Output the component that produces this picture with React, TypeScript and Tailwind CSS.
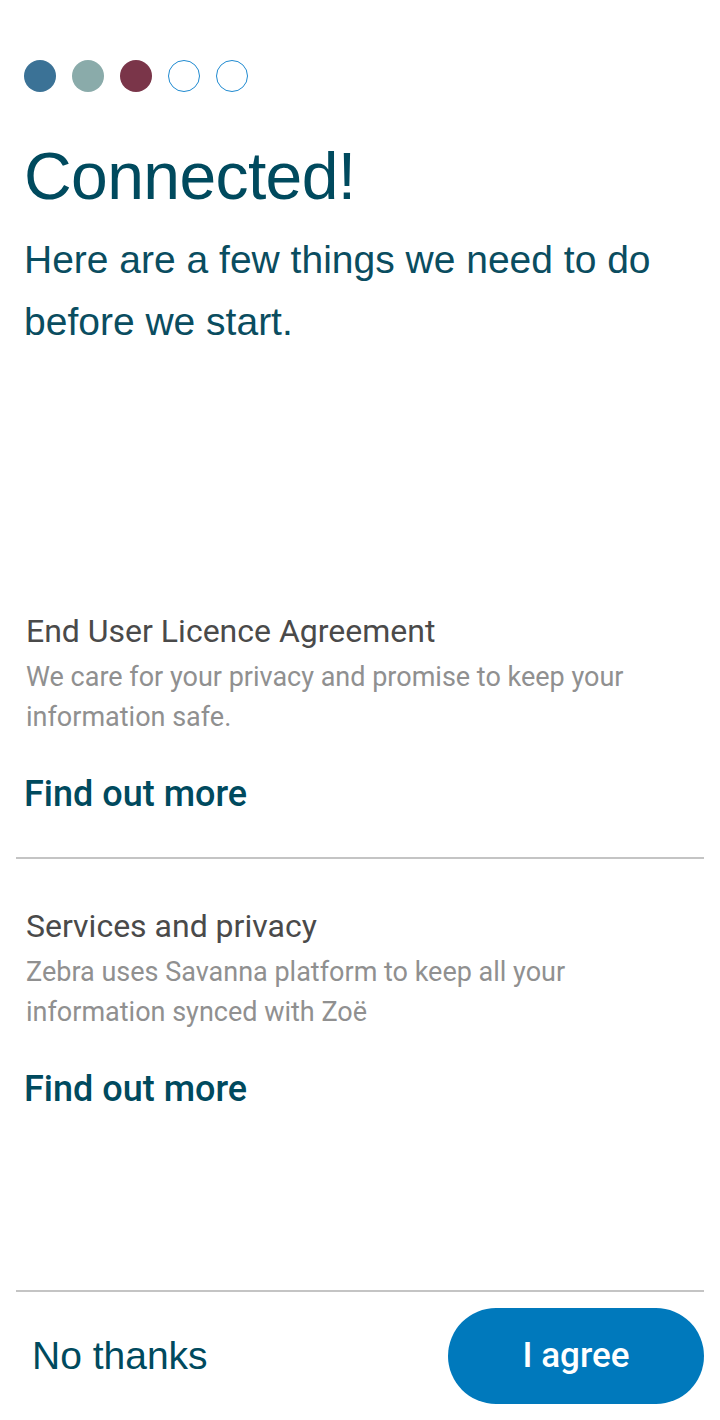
import React from "react";

const sections = [
  {
    title: "End User Licence Agreement",
    body: "We care for your privacy and promise to keep your information safe.",
  },
  {
    title: "Services and privacy",
    body: "Zebra uses Savanna platform to keep all your information synced with Zoë",
  },
];

export default function App() {
  return (
    <div className="w-[720px] h-[1420px] bg-white flex flex-col" style={{ fontFamily: "Roboto, sans-serif" }}>
      {/* Step dots */}
      <div className="flex gap-4 px-6 pt-[60px]">
        <span className="w-8 h-8 rounded-full bg-[#3b7296]" />
        <span className="w-8 h-8 rounded-full bg-[#8aabaa]" />
        <span className="w-8 h-8 rounded-full bg-[#7a3549]" />
        <span className="w-8 h-8 rounded-full border border-[#1f8ad0]" />
        <span className="w-8 h-8 rounded-full border border-[#1f8ad0]" />
      </div>

      {/* Heading */}
      <div className="px-6 pt-[46px] text-[#004a5e] font-['Liberation_Sans',Arial,sans-serif]">
        <h1 className="text-[66px] leading-[76px] tracking-[-0.6px]">Connected!</h1>
        <p className="mt-[15px] text-[39px] leading-[62px] text-[#0a4d60]">
          Here are a few things we need to do before we start.
        </p>
      </div>

      {/* Agreement sections */}
      <div className="mt-[258px] flex flex-col">
        {sections.map((s, i) => (
          <div
            key={s.title}
            className={`mx-4 px-[10px] ${i === 0 ? "pb-[41px] border-b-2 border-[#c4c4c4]" : "pt-[47px]"}`}
          >
            <h2 className="text-[32px] leading-[40px] text-[#4a4a4a]">{s.title}</h2>
            <p className="mt-[6px] text-[27px] leading-[40px] text-[#909090]">{s.body}</p>
            <button className="mt-[35px] -ml-[2px] text-[36px] leading-[44px] font-medium text-[#004a5e]">
              Find out more
            </button>
          </div>
        ))}
      </div>

      {/* Footer */}
      <div className="mt-auto mx-4 border-t-2 border-[#c4c4c4] flex items-center justify-between pt-4 pb-4">
        <button className="pl-4 text-[39px] text-[#004a5e] font-['Liberation_Sans',Arial,sans-serif]">
          No thanks
        </button>
        <button className="w-[256px] h-[96px] rounded-full bg-[#0079bc] text-white text-[35px] font-medium">
          I agree
        </button>
      </div>
    </div>
  );
}
